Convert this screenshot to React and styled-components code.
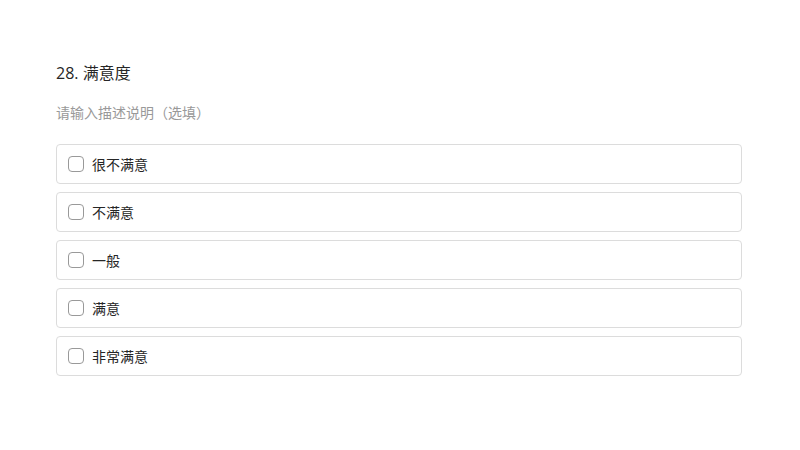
import React from "react";
import styled, { createGlobalStyle } from "styled-components";

const GlobalStyle = createGlobalStyle`
  html, body {
    margin: 0;
    padding: 0;
    background: #fff;
  }
  body {
    font-family: "Open Sans", "Noto Sans CJK SC", sans-serif;
    color: #333;
  }
`;

const Page = styled.div`
  width: 800px;
  height: 450px;
  box-sizing: border-box;
  padding: 62px 58px 0 56px;
`;

const Title = styled.div`
  font-size: 16px;
  line-height: 22px;
  color: #262626;
`;

const Desc = styled.div`
  margin-top: 19px;
  font-size: 14px;
  line-height: 20px;
  color: #999;
`;

const Options = styled.div`
  margin-top: 21px;
  display: flex;
  flex-direction: column;
  gap: 8px;
`;

const Option = styled.label`
  display: flex;
  align-items: center;
  height: 40px;
  box-sizing: border-box;
  border: 1px solid #dcdcdc;
  border-radius: 4px;
  padding: 0 11px;
  cursor: pointer;
`;

const Box = styled.span`
  width: 16px;
  height: 16px;
  box-sizing: border-box;
  border: 1px solid #999;
  border-radius: 4px;
  background: #fff;
  flex-shrink: 0;
`;

const Text = styled.span`
  margin-left: 8px;
  font-size: 14px;
  color: #262626;
`;

const options = ["很不满意", "不满意", "一般", "满意", "非常满意"];

export default function App() {
  return (
    <>
      <GlobalStyle />
      <Page>
        <Title>28. 满意度</Title>
        <Desc>请输入描述说明（选填）</Desc>
        <Options>
          {options.map((o) => (
            <Option key={o}>
              <Box />
              <Text>{o}</Text>
            </Option>
          ))}
        </Options>
      </Page>
    </>
  );
}
